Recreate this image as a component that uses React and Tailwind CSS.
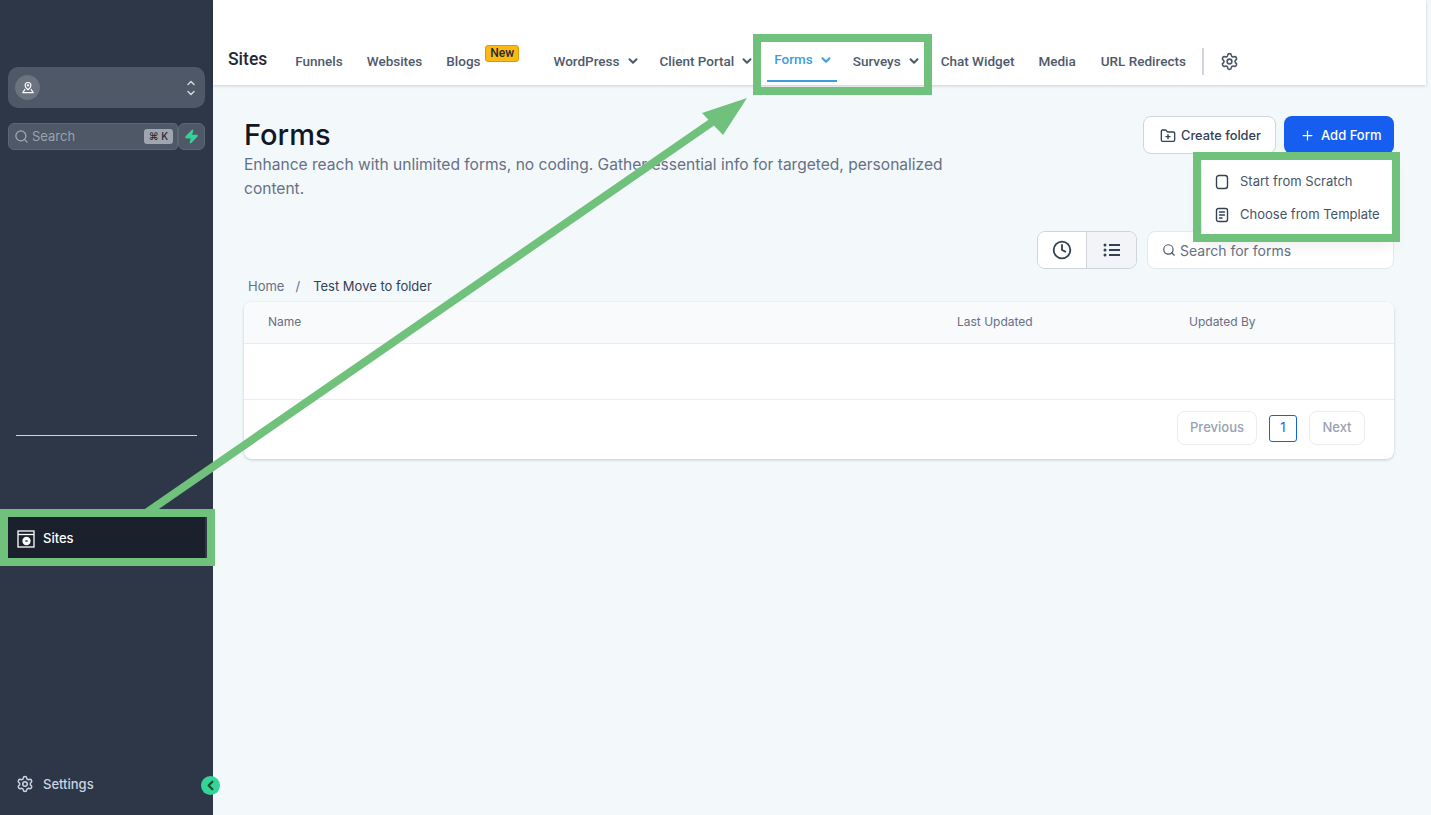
import { ChevronDown, ChevronLeft, Clock, FolderPlus, Plus, Search, Settings, Zap } from 'lucide-react';

const inter = { fontFamily: 'Inter, sans-serif' };

const NavLink = ({ children, caret, className = '' }) => (
  <span className={`flex items-center text-[13.500px] font-medium text-[#4f5a6b] whitespace-nowrap ${className}`}>
    {children}
    {caret && <ChevronDown className="w-[14px] h-[14px] ml-[6px] stroke-[3.500]" />}
  </span>
);

const PinIcon = () => (
  <svg viewBox="0 0 24 24" className="w-[14px] h-[14px] text-white" fill="none" stroke="currentColor" strokeWidth="2">
    <path d="M12 15c3.500-3 5-5 5-7.500a5 5 0 0 0-10 0C7 10 8.500 12 12 15z" />
    <circle cx="12" cy="7.500" r="1" fill="currentColor" />
    <path d="M7 14l-4 6h18l-4-6" strokeLinejoin="round" />
  </svg>
);

const SitesIcon = () => (
  <svg viewBox="0 0 18 18" className="w-[18px] h-[18px] text-white" fill="none" stroke="currentColor" strokeWidth="1.300">
    <rect x="1" y="1" width="16" height="16" />
    <path d="M1 4.500h16" />
    <circle cx="9.500" cy="11" r="3.500" fill="currentColor" />
    <path d="M8.300 11h2.400" stroke="#1a202c" />
  </svg>
);

const UpDownIcon = () => (
  <svg viewBox="0 0 10 16" className="w-[10px] h-[16px] text-[#d1d5db]" fill="none" stroke="currentColor" strokeWidth="1.500" strokeLinecap="round" strokeLinejoin="round">
    <path d="M2 4.500L5 1.500L8 4.500" />
    <path d="M2 11.500L5 14.500L8 11.500" />
  </svg>
);

const BlankIcon = () => (
  <svg viewBox="0 0 14 16" className="w-[14px] h-[16px] text-[#344054]" fill="none" stroke="currentColor" strokeWidth="1.400">
    <rect x="1.500" y="1.500" width="11" height="13" rx="2.500" />
  </svg>
);

const TemplateIcon = () => (
  <svg viewBox="0 0 14 16" className="w-[14px] h-[16px] text-[#344054]" fill="none" stroke="currentColor" strokeWidth="1.400" strokeLinecap="round">
    <rect x="1.500" y="1.500" width="11" height="13" rx="2" />
    <path d="M4.500 5h5M4.500 8h5M4.500 11h2.500" />
  </svg>
);

const ListIcon = () => (
  <svg viewBox="0 0 18 14" className="w-[18px] h-[14px] text-[#344054]" fill="none" stroke="currentColor" strokeWidth="2">
    <path d="M6 2h11M6 7h11M6 12h11" />
    <circle cx="2" cy="2" r="1.500" fill="currentColor" stroke="none" />
    <circle cx="2" cy="7" r="1.500" fill="currentColor" stroke="none" />
    <circle cx="2" cy="12" r="1.500" fill="currentColor" stroke="none" />
  </svg>
);

const Sidebar = () => (
  <aside className="w-[213px] shrink-0 h-full bg-[#2d3748] flex flex-col px-2 pt-[67px]">
    <div className="h-[41px] rounded-[10px] bg-[#4f5866] flex items-center justify-between pl-[7px] pr-[9px]">
      <span className="w-[25px] h-[25px] rounded-full bg-[#6b7280] flex items-center justify-center"><PinIcon /></span>
      <UpDownIcon />
    </div>
    <div className="flex mt-[15px] h-[27px]">
      <div className="w-[170px] rounded-l-[6px] rounded-r-[4px] bg-[#4f5866] border border-[#5c6573] flex items-center pl-[5px] pr-[4px]">
        <Search className="w-[15px] h-[15px] text-[#a3aab5]" />
        <span className="ml-[3px] pt-[1px] text-[13px] text-[#98a2b3]">Search</span>
        <span className="ml-auto h-[15px] w-[29px] rounded-[3px] bg-[#a0a6b1] flex items-center justify-center text-[10px] font-medium text-[#1f2937]">⌘ K</span>
      </div>
      <div className="w-[27px] rounded-[6px] bg-[#4f5866] border border-[#5c6573] flex items-center justify-center">
        <Zap className="w-[15px] h-[15px] text-[#34d399] fill-[#34d399]" />
      </div>
    </div>
    <div className="mt-[285px] ml-2 w-[181px] border-t border-[#cbd5e1]" />
    <div className="mt-[81px] h-[41px] bg-[#1a202c] flex items-center pl-[9px] pt-[2px]">
      <SitesIcon />
      <span className="ml-[8px] pt-[1px] text-[13px] font-medium text-white">Sites</span>
    </div>
    <div className="mt-auto mb-[21px] flex items-center pl-[8px]">
      <Settings className="w-[18px] h-[18px] text-[#cbd5e1]" />
      <span className="ml-[9px] text-[13px] font-medium text-[#cbd5e1]">Settings</span>
    </div>
  </aside>
);

const Header = () => (
  <header className="h-[85px] mr-[5px] bg-white shadow-[0_1px_3px_rgba(16,24,40,0.18)] flex items-center pl-[15px] pt-[37px] relative">
    <span className="text-[17.500px] font-medium text-[#1f2937] mt-[-4px]">Sites</span>
    <NavLink className="ml-[28px]">Funnels</NavLink>
    <NavLink className="ml-[24px]">Websites</NavLink>
    <NavLink className="ml-[24px] relative">
      Blogs
      <span className="absolute left-[39px] top-[-6px] h-[17px] px-[4px] rounded-[3px] bg-[#fdb913] border border-[#d89b0c] text-[12px] leading-[15px] text-[#1f2937]">New</span>
    </NavLink>
    <NavLink caret className="ml-[73px]">WordPress</NavLink>
    <NavLink caret className="ml-[20px]">Client Portal</NavLink>
    <div className="relative ml-[20px] h-[48px] flex items-center">
      <NavLink caret className="!text-[#3b9ee0] mt-[-3px]">Forms</NavLink>
      <span className="absolute left-[-7px] w-[70px] bottom-[3px] h-[2px] bg-[#3b9ee0]" />
    </div>
    <NavLink caret className="ml-[20px]">Surveys</NavLink>
    <NavLink className="ml-[20px]">Chat Widget</NavLink>
    <NavLink className="ml-[24px]">Media</NavLink>
    <NavLink className="ml-[25px]">URL Redirects</NavLink>
    <span className="ml-[16px] h-[27px] w-[2px] bg-[#d0d5dd]" />
    <Settings className="ml-[16px] w-[19px] h-[19px] text-[#4a5565]" />
  </header>
);

const Table = () => (
  <div className="rounded-[8px] bg-white shadow-[0_1px_3px_rgba(16,24,40,0.2)] overflow-hidden text-[12px] text-[#667085]">
    <div className="h-[42px] bg-[#f9fafb] border-b border-[#eaecf0] flex items-center pl-6 pb-[1px]">
      <span className="w-[689px]">Name</span>
      <span className="w-[232px]">Last Updated</span>
      <span>Updated By</span>
    </div>
    <div className="h-[56px] border-b border-[#eaecf0]" />
    <div className="h-[59px] flex items-center justify-end gap-3 pr-[29px] pb-[3px] text-[13px] font-medium">
      <span className="h-[34px] w-[80px] rounded-[8px] border border-[#eaecf0] flex items-center justify-center text-[#98a2b3]">Previous</span>
      <span className="h-[27px] w-[28px] rounded-[3px] border border-[#155eef] flex items-center justify-center font-normal text-[#155eef]">1</span>
      <span className="h-[34px] w-[56px] rounded-[8px] border border-[#eaecf0] flex items-center justify-center text-[#98a2b3]">Next</span>
    </div>
  </div>
);

const Content = () => (
  <div className="relative pl-[31px] pr-[37px] pt-[31px]" style={inter}>
    <div className="flex justify-between h-[115px]">
      <div className="w-[710px]">
        <h1 className="text-[29px] leading-[38px] font-medium text-[#101828]">Forms</h1>
        <p className="text-[15.560px] leading-[24px] mt-[-1px] text-[#667085]">Enhance reach with unlimited forms, no coding. Gather essential info for targeted, personalized content.</p>
      </div>
      <div className="flex gap-2 h-[38px]">
        <button className="w-[133px] rounded-[8px] bg-white border border-[#d0d5dd] flex items-center gap-[5px] pl-[16px] pt-[1px] text-[12.800px] font-medium text-[#344054]">
          <FolderPlus className="w-[16px] h-[16px]" /> Create folder
        </button>
        <button className="w-[110px] rounded-[8px] bg-[#155eef] flex items-center gap-[6px] pl-[16px] pt-[1px] text-[13px] font-medium text-white">
          <Plus className="w-[15px] h-[15px]" /> Add Form
        </button>
      </div>
    </div>
    <div className="flex justify-end gap-[10px] h-[38px]">
      <div className="flex w-[100px] rounded-[8px] border border-[#d0d5dd] overflow-hidden">
        <span className="w-[49px] bg-white border-r border-[#d0d5dd] flex items-center justify-center"><Clock className="w-[20px] h-[20px] stroke-[2.200] text-[#344054]" /></span>
        <span className="flex-1 bg-[#f2f4f7] flex items-center justify-center"><ListIcon /></span>
      </div>
      <div className="w-[247px] rounded-[8px] bg-white border border-[#e4e7ec] flex items-center pl-[14px]">
        <Search className="w-[14px] h-[14px] text-[#475467]" />
        <span className="ml-[4px] text-[14px] text-[#667085]">Search for forms</span>
      </div>
    </div>
    <div className="flex items-center h-[33px] pl-1 pt-[2px] text-[13px]">
      <span className="text-[#667085]">Home</span>
      <span className="ml-[11px] text-[#667085]">/</span>
      <span className="ml-[13px] text-[#344054]">Test Move to folder</span>
    </div>
    <Table />
    {/* Add Form menu */}
    <div className="absolute left-[989px] top-[75px] w-[190px] h-[74px] bg-white shadow-[0_8px_16px_rgba(16,24,40,0.12)] flex flex-col justify-center gap-[14px] pl-[13px] pt-[2px] text-[13px] text-[#475467]">
      <span className="flex items-center gap-[11px] h-[19px]"><BlankIcon /> Start from Scratch</span>
      <span className="flex items-center gap-[11px] h-[19px]"><TemplateIcon /> Choose from Template</span>
    </div>
  </div>
);

// green callouts drawn on top of the screenshot
const Annotations = () => (
  <>
    <svg className="absolute inset-0 pointer-events-none" width="1431" height="815" viewBox="0 0 1431 815">
      <path d="M146 513L718 118" stroke="#70c17b" strokeWidth="8" fill="none" />
      <path d="M747 98L702 113L723 135Z" fill="#70c17b" />
    </svg>
    <div className="absolute left-0 top-[509px] w-[215px] h-[57px] border-[8px] border-[#70c17b] pointer-events-none" />
    <div className="absolute left-[753px] top-[34px] w-[179px] h-[61px] border-[8px] border-[#70c17b] pointer-events-none" />
    <div className="absolute left-[1193px] top-[152px] w-[207px] h-[90px] border-[8px] border-[#70c17b] pointer-events-none" />
  </>
);

export default function App() {
  return (
    <div className="relative w-[1431px] h-[815px] flex overflow-hidden bg-[#f3f8fb]" style={inter}>
      <Sidebar />
      <main className="flex-1 min-w-0">
        <div style={{ fontFamily: 'Roboto, sans-serif' }}>
          <Header />
        </div>
        <Content />
      </main>
      <span className="absolute left-[201px] top-[776px] w-[19px] h-[19px] rounded-full bg-[#34d399] flex items-center justify-center">
        <ChevronLeft className="w-[15px] h-[15px] stroke-[3.500] text-[#14532d]" />
      </span>
      <Annotations />
    </div>
  );
}
